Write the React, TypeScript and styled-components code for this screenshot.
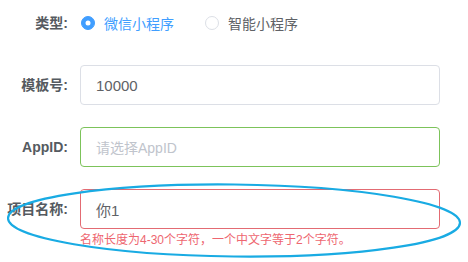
import React from "react";
import styled, { createGlobalStyle } from "styled-components";

const GlobalStyle = createGlobalStyle`
  html, body {
    margin: 0;
    padding: 0;
    background: #ffffff;
  }
  body {
    font-family: "Liberation Sans", "Noto Sans CJK SC", sans-serif;
    -webkit-font-smoothing: antialiased;
  }
`;

const Page = styled.div`
  position: relative;
  width: 468px;
  height: 262px;
  overflow: hidden;
`;

const Form = styled.form`
  padding-top: 3px;
  width: 440px;
`;

const Row = styled.div`
  display: flex;
  align-items: flex-start;
  margin-bottom: 22px;
  position: relative;
`;

const Label = styled.label`
  width: 80px;
  flex: none;
  box-sizing: border-box;
  padding-right: 12px;
  text-align: right;
  line-height: 40px;
  font-size: 14px;
  font-weight: bold;
  color: #555a60;
  white-space: nowrap;
`;

const Content = styled.div`
  flex: 1;
  position: relative;
  min-height: 40px;
  display: flex;
  align-items: center;
`;

const RadioItem = styled.span<{ $checked?: boolean }>`
  display: inline-flex;
  align-items: center;
  margin-right: 30px;
  margin-left: 1px;
  font-size: 14px;
  color: ${p => (p.$checked ? "#409eff" : "#606266")};
`;

const RadioDot = styled.span<{ $checked?: boolean }>`
  width: 14px;
  height: 14px;
  box-sizing: border-box;
  border-radius: 50%;
  margin-right: 9px;
  border: 1px solid ${p => (p.$checked ? "#409eff" : "#dcdfe6")};
  background: ${p => (p.$checked ? "#409eff" : "#fff")};
  position: relative;
  &::after {
    content: "";
    position: absolute;
    left: 50%;
    top: 50%;
    width: 5px;
    height: 5px;
    border-radius: 50%;
    background: #fff;
    transform: translate(-50%, -50%);
    display: ${p => (p.$checked ? "block" : "none")};
  }
`;

const Input = styled.div<{ $state?: "normal" | "success" | "error" }>`
  width: 100%;
  height: 40px;
  box-sizing: border-box;
  border-radius: 4px;
  border: 1px solid
    ${p =>
      p.$state === "success" ? "#7cc35a" : p.$state === "error" ? "#e36b73" : "#dcdfe6"};
  padding: 0 15px;
  display: flex;
  align-items: center;
  font-size: 15px;
  color: #606266;
`;

const Placeholder = styled.span`
  color: #c0c4cc;
  font-size: 14px;
`;

const ErrorText = styled.div`
  position: absolute;
  top: 100%;
  left: 0;
  padding-top: 5px;
  font-size: 12px;
  line-height: 1;
  color: #ee6670;
  white-space: nowrap;
`;

const Mark = styled.svg`
  position: absolute;
  left: 0;
  top: 0;
  pointer-events: none;
`;

export default function App() {
  return (
    <Page>
      <GlobalStyle />
      <Form>
        <Row>
          <Label>类型:</Label>
          <Content>
            <RadioItem $checked>
              <RadioDot $checked />
              微信小程序
            </RadioItem>
            <RadioItem>
              <RadioDot />
              智能小程序
            </RadioItem>
          </Content>
        </Row>
        <Row>
          <Label>模板号:</Label>
          <Content>
            <Input>10000</Input>
          </Content>
        </Row>
        <Row>
          <Label>AppID:</Label>
          <Content>
            <Input $state="success">
              <Placeholder>请选择AppID</Placeholder>
            </Input>
          </Content>
        </Row>
        <Row>
          <Label>项目名称:</Label>
          <Content>
            <Input $state="error">你1</Input>
            <ErrorText>名称长度为4-30个字符，一个中文字等于2个字符。</ErrorText>
          </Content>
        </Row>
      </Form>
      <Mark width="468" height="262" viewBox="0 0 468 262">
        <ellipse
          cx="234"
          cy="220.5"
          rx="226"
          ry="36"
          transform="rotate(0.6 234 220.5)"
          fill="none"
          stroke="#19abe3"
          strokeWidth="2.2"
        />
      </Mark>
    </Page>
  );
}
